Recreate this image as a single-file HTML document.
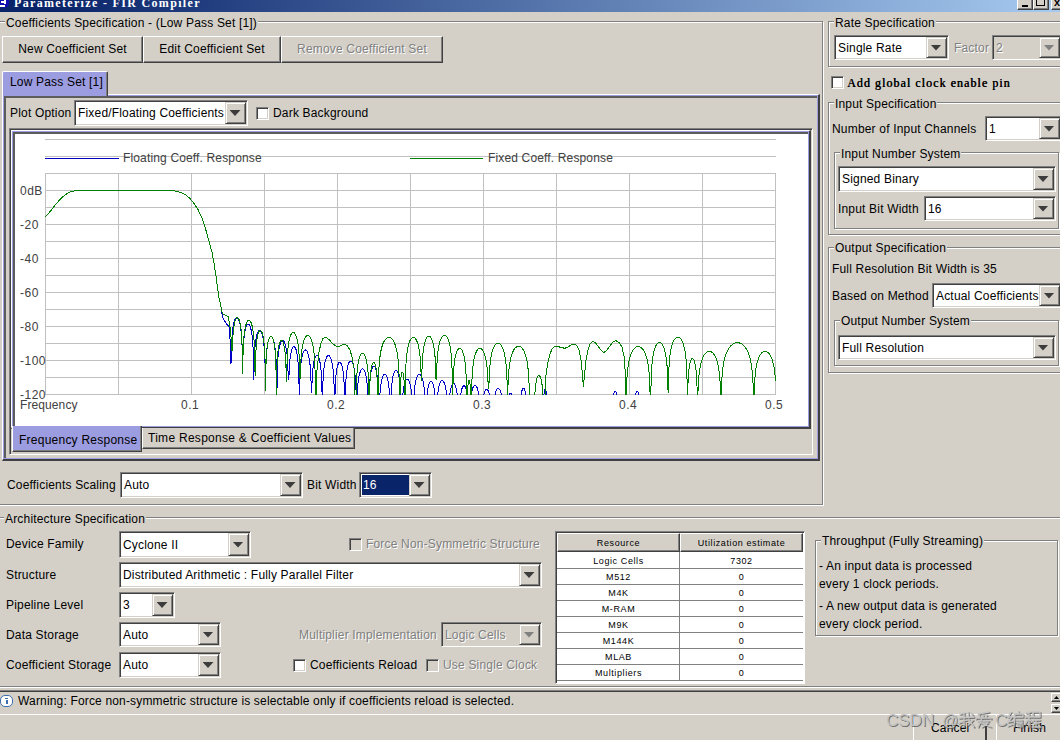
<!DOCTYPE html>
<html><head><meta charset="utf-8">
<style>
html,body{margin:0;padding:0}
body{width:1060px;height:740px;overflow:hidden;background:#D4D0C8;position:relative;font-family:"Liberation Sans",sans-serif;font-size:12px;color:#000;letter-spacing:0.18px}
div,span{box-sizing:border-box}
.a{position:absolute}
.t{position:absolute;white-space:nowrap;line-height:14px;height:14px}
.dis{color:#808080;text-shadow:1px 1px 0 #fff}
.grp{position:absolute;border:1px solid #808080;box-shadow:inset 1px 1px 0 #fff,1px 1px 0 #fff}
.gt{position:absolute;white-space:nowrap;line-height:14px;margin-top:1px;background:#D4D0C8;padding:0 1px}
.btn{position:absolute;background:#D4D0C8;border-top:1px solid #fff;border-left:1px solid #fff;border-right:1px solid #404040;border-bottom:1px solid #404040;box-shadow:inset -1px -1px 0 #808080;text-align:center}
.cb{position:absolute;background:#fff;border-top:1px solid #808080;border-left:1px solid #808080;border-right:1px solid #fff;border-bottom:1px solid #fff;box-shadow:inset 1px 1px 0 #404040,inset -1px -1px 0 #D4D0C8}
.cb .v{position:absolute;left:3px;top:50%;margin-top:-7px;line-height:14px;white-space:nowrap}
.cb .ar{position:absolute;right:1px;top:1px;bottom:1px;width:21px;background:#D4D0C8;border-top:1px solid #D4D0C8;border-left:1px solid #D4D0C8;border-right:1px solid #404040;border-bottom:1px solid #404040;box-shadow:inset 1px 1px 0 #fff,inset -1px -1px 0 #808080}
.cb .ar:after{content:"";position:absolute;left:50%;top:50%;margin-left:-6px;margin-top:-3px;width:11px;height:6px;background:#000;clip-path:polygon(0 0,100% 0,50% 100%);background:#3C3C3C}
.cb.dsb{background:#D4D0C8}
.cb.dsb .v{color:#808080;text-shadow:1px 1px 0 #fff}
.cb.dsb .ar:after{background:#808080}
.chk{position:absolute;width:13px;height:13px;background:#fff;border-top:1px solid #808080;border-left:1px solid #808080;border-right:1px solid #fff;border-bottom:1px solid #fff;box-shadow:inset 1px 1px 0 #404040,inset -1px -1px 0 #D4D0C8}
.chk.dsb{background:#D4D0C8}
.bf{position:absolute;border-top:1px solid #fff;border-left:1px solid #fff;border-right:2px solid #404040;border-bottom:2px solid #404040;box-shadow:inset 1px 1px 0 #9C9CE0,inset -1px -1px 0 #9C9CE0,inset 3px 3px 0 #5c5c5c}
.sunk{position:absolute;border-top:1px solid #808080;border-left:1px solid #808080;border-right:1px solid #fff;border-bottom:1px solid #fff;box-shadow:inset 1px 1px 0 #404040,inset -1px -1px 0 #D4D0C8}
.tab{position:absolute;background:#D4D0C8;border-top:1px solid #fff;border-left:1px solid #fff;border-right:1px solid #404040;box-shadow:inset -1px 0 0 #808080}
.tabsel{background:#9C9CE0}
</style></head><body>

<!-- title bar -->
<div class="a" style="left:0;top:0;width:1060px;height:12px;background:linear-gradient(to right,#0A246A 0%,#0A246A 5%,#A6CAF0 100%);overflow:hidden">
  <div class="t" style="left:14px;top:-5px;font-family:'Liberation Serif',serif;font-weight:bold;font-size:12px;letter-spacing:1.33px;color:#fff;line-height:16px;height:16px">Parameterize - FIR Compiler</div>
  <div class="a" style="left:-1px;top:-4px;width:10px;height:12px;border-radius:5px;background:#1010B0"></div>
  <div class="a" style="left:1px;top:1px;width:4px;height:2px;background:#fff"></div>
  <div class="a" style="left:4px;top:-1px;width:2px;height:5px;background:#fff"></div>
  <div class="a" style="left:0px;top:5px;width:5px;height:2px;background:#fff"></div>
  <div class="btn" style="left:1017px;top:-6px;width:16px;height:16px"></div>
  <div class="a" style="left:1022px;top:5px;width:6px;height:2px;background:#000"></div>
  <div class="btn" style="left:1033px;top:-6px;width:16px;height:16px"></div>
  <div class="a" style="left:1036px;top:-2px;width:9px;height:8px;border:1px solid #000;border-top-width:2px"></div>
  <div class="btn" style="left:1051px;top:-6px;width:16px;height:16px"></div>
  <div class="t" style="left:1054px;top:-5px;font-weight:bold;font-size:11px">x</div>
</div>

<!-- Coefficients Specification group -->
<div class="grp" style="left:-3px;top:21px;width:826px;height:484px"></div>
<div class="gt" style="left:5px;top:15px">Coefficients Specification - (Low Pass Set [1])</div>

<div class="btn" style="left:2px;top:36px;width:141px;height:27px;line-height:24px">New Coefficient Set</div>
<div class="btn" style="left:143px;top:36px;width:138px;height:27px;line-height:24px">Edit Coefficient Set</div>
<div class="btn dis" style="left:281px;top:36px;width:162px;height:27px;line-height:24px;color:#808080;text-shadow:1px 1px 0 #fff">Remove Coefficient Set</div>

<!-- outer tab content -->
<div class="bf" style="left:2px;top:94px;width:818px;height:367px"></div>
<div class="tab tabsel" style="left:2px;top:71px;width:106px;height:25px;border-radius:2px 2px 0 0"></div>
<div class="t" style="left:10px;top:75px">Low Pass Set [1]</div>

<div class="t" style="left:10px;top:106px">Plot Option</div>
<div class="cb" style="left:74px;top:100px;width:174px;height:26px"><span class="v">Fixed/Floating Coefficients</span><div class="ar"></div></div>
<div class="chk" style="left:256px;top:107px"></div>
<div class="t" style="left:273px;top:106px">Dark Background</div>

<!-- chart tabbed pane -->
<div class="sunk" style="left:9px;top:128px;width:804px;height:327px"></div>
<div class="bf" style="left:11px;top:130px;width:800px;height:299px;background:#fff"></div>
<svg class="a" style="left:0;top:0" width="1060" height="460" shape-rendering="crispEdges">
<rect x="45" y="139" width="731" height="1" fill="#C0C0C0"/>
<rect x="45" y="156" width="731" height="1" fill="#C0C0C0"/>
<rect x="45" y="173" width="1" height="222" fill="#C0C0C0"/>
<rect x="118" y="173" width="1" height="222" fill="#C0C0C0"/>
<rect x="191" y="173" width="1" height="222" fill="#C0C0C0"/>
<rect x="264" y="173" width="1" height="222" fill="#C0C0C0"/>
<rect x="337" y="173" width="1" height="222" fill="#C0C0C0"/>
<rect x="410" y="173" width="1" height="222" fill="#C0C0C0"/>
<rect x="483" y="173" width="1" height="222" fill="#C0C0C0"/>
<rect x="556" y="173" width="1" height="222" fill="#C0C0C0"/>
<rect x="629" y="173" width="1" height="222" fill="#C0C0C0"/>
<rect x="702" y="173" width="1" height="222" fill="#C0C0C0"/>
<rect x="775" y="173" width="1" height="222" fill="#C0C0C0"/>
<rect x="45" y="173" width="731" height="1" fill="#C0C0C0"/>
<rect x="45" y="190" width="731" height="1" fill="#C0C0C0"/>
<rect x="45" y="207" width="731" height="1" fill="#C0C0C0"/>
<rect x="45" y="224" width="731" height="1" fill="#C0C0C0"/>
<rect x="45" y="241" width="731" height="1" fill="#C0C0C0"/>
<rect x="45" y="258" width="731" height="1" fill="#C0C0C0"/>
<rect x="45" y="275" width="731" height="1" fill="#C0C0C0"/>
<rect x="45" y="292" width="731" height="1" fill="#C0C0C0"/>
<rect x="45" y="309" width="731" height="1" fill="#C0C0C0"/>
<rect x="45" y="326" width="731" height="1" fill="#C0C0C0"/>
<rect x="45" y="343" width="731" height="1" fill="#C0C0C0"/>
<rect x="45" y="360" width="731" height="1" fill="#C0C0C0"/>
<rect x="45" y="377" width="731" height="1" fill="#C0C0C0"/>
<rect x="45" y="394" width="731" height="1" fill="#C0C0C0"/>
<rect x="45" y="158" width="74" height="1" fill="#0000C0"/>
<rect x="410" y="158" width="73" height="1" fill="#008000"/>
</svg>
<div class="t" style="left:20px;top:184px;color:#404040;letter-spacing:0.5px">0dB</div>
<div class="t" style="left:20px;top:218px;color:#404040;letter-spacing:0.5px">-20</div>
<div class="t" style="left:20px;top:252px;color:#404040;letter-spacing:0.5px">-40</div>
<div class="t" style="left:20px;top:286px;color:#404040;letter-spacing:0.5px">-60</div>
<div class="t" style="left:20px;top:320px;color:#404040;letter-spacing:0.5px">-80</div>
<div class="t" style="left:20px;top:354px;color:#404040;letter-spacing:0.5px">-100</div>
<div class="t" style="left:20px;top:388px;color:#404040;letter-spacing:0.5px">-120</div>
<div class="t" style="left:20px;top:398px;color:#404040;letter-spacing:0.1px">Frequency</div>
<div class="t" style="left:181px;top:398px;color:#404040;letter-spacing:0.5px">0.1</div>
<div class="t" style="left:327px;top:398px;color:#404040;letter-spacing:0.5px">0.2</div>
<div class="t" style="left:473px;top:398px;color:#404040;letter-spacing:0.5px">0.3</div>
<div class="t" style="left:619px;top:398px;color:#404040;letter-spacing:0.5px">0.4</div>
<div class="t" style="left:765px;top:398px;color:#404040;letter-spacing:0.5px">0.5</div>
<div class="t" style="left:123px;top:151px;color:#404040;letter-spacing:0.15px">Floating Coeff. Response</div>
<div class="t" style="left:488px;top:151px;color:#404040;letter-spacing:0.15px">Fixed Coeff. Response</div>
<svg class="a" style="left:0;top:0" width="1060" height="460">
<defs><clipPath id="pc"><rect x="44" y="170" width="733" height="225"/></clipPath></defs>
<g clip-path="url(#pc)" fill="none" stroke-width="1" stroke-linejoin="miter" shape-rendering="crispEdges">
<polyline points="45.50,216.80 48.00,214.00 50.00,211.60 53.00,208.00 56.00,204.00 60.00,199.50 63.00,196.60 66.00,194.30 69.00,192.50 72.00,191.40 75.00,190.80 79.00,190.50 170.00,190.50 174.00,190.70 178.00,191.60 182.00,193.00 186.00,195.00 190.00,198.50 194.00,203.50 198.00,209.50 202.00,218.00 206.00,230.50 209.00,241.00 212.00,252.40 214.00,263.00 216.00,276.00 217.50,288.00 219.00,298.00 220.50,304.00 221.50,309.50 222.30,316.00 224.00,320.00 226.00,323.00 229.00,327.00 230.50,345.00 231.00,364.00 231.00,364.00 231.25,357.24 231.50,347.04 231.76,341.11 232.01,336.94 232.26,333.75 232.51,331.19 232.77,329.06 233.02,327.27 233.27,325.73 233.52,324.40 233.77,323.24 234.03,322.23 234.28,321.35 234.53,320.58 234.78,319.92 235.03,319.36 235.29,318.88 235.54,318.48 235.79,318.16 236.04,317.91 236.30,317.74 236.55,317.63 236.80,317.60 237.05,317.63 237.30,317.74 237.56,317.91 237.81,318.16 238.06,318.48 238.31,318.88 238.57,319.36 238.82,319.92 239.07,320.58 239.32,321.35 239.57,322.23 239.83,323.24 240.08,324.40 240.33,325.73 240.58,327.27 240.83,329.06 241.09,331.19 241.34,333.75 241.59,336.94 241.84,341.11 242.10,347.04 242.35,357.24 242.60,359.50 242.60,359.50 242.85,359.50 243.11,353.09 243.36,347.17 243.62,343.01 243.87,339.82 244.13,337.27 244.38,335.16 244.64,333.38 244.89,331.86 245.15,330.55 245.40,329.42 245.65,328.44 245.91,327.58 246.16,326.85 246.42,326.23 246.67,325.70 246.93,325.26 247.18,324.91 247.44,324.64 247.69,324.45 247.95,324.34 248.20,324.30 248.45,324.34 248.71,324.45 248.96,324.64 249.22,324.91 249.47,325.26 249.73,325.70 249.98,326.23 250.24,326.85 250.49,327.58 250.75,328.44 251.00,329.42 251.25,330.55 251.51,331.86 251.76,333.38 252.02,335.16 252.27,337.27 252.53,339.82 252.78,343.01 253.04,347.17 253.29,353.09 253.55,363.29 253.80,379.70 253.80,379.70 254.05,370.04 254.30,359.84 254.55,353.91 254.80,349.74 255.05,346.55 255.30,343.99 255.55,341.86 255.80,340.07 256.05,338.53 256.30,337.20 256.55,336.04 256.80,335.03 257.05,334.15 257.30,333.38 257.55,332.72 257.80,332.16 258.05,331.68 258.30,331.28 258.55,330.96 258.80,330.71 259.05,330.54 259.30,330.43 259.55,330.40 259.80,330.43 260.05,330.54 260.30,330.71 260.55,330.96 260.80,331.28 261.05,331.68 261.30,332.16 261.55,332.72 261.80,333.38 262.05,334.15 262.30,335.03 262.55,336.04 262.80,337.20 263.05,338.53 263.30,340.07 263.55,341.86 263.80,343.99 264.05,346.55 264.30,349.74 264.55,353.91 264.80,359.84 265.05,363.50 265.30,363.50 265.30,363.50 265.55,363.50 265.80,363.50 266.05,360.01 266.30,355.84 266.55,352.65 266.80,350.09 267.05,347.96 267.30,346.17 267.55,344.63 267.80,343.30 268.05,342.14 268.30,341.13 268.55,340.25 268.80,339.48 269.05,338.82 269.30,338.26 269.55,337.78 269.80,337.38 270.05,337.06 270.30,336.81 270.55,336.64 270.80,336.53 271.05,336.50 271.30,336.53 271.55,336.64 271.80,336.81 272.05,337.06 272.30,337.38 272.55,337.78 272.80,338.26 273.05,338.82 273.30,339.48 273.55,340.25 273.80,341.13 274.05,342.14 274.30,343.30 274.55,344.63 274.80,346.17 275.05,347.96 275.30,350.09 275.55,352.65 275.80,355.84 276.05,360.01 276.30,365.94 276.55,376.14 276.80,440.00 276.80,440.00 277.05,380.14 277.31,369.94 277.56,364.01 277.82,359.84 278.07,356.65 278.33,354.09 278.58,351.96 278.83,350.17 279.09,348.63 279.34,347.30 279.60,346.14 279.85,345.13 280.11,344.25 280.36,343.48 280.62,342.82 280.87,342.26 281.12,341.78 281.38,341.38 281.63,341.06 281.89,340.81 282.14,340.64 282.40,340.53 282.65,340.50 282.90,340.53 283.16,340.64 283.41,340.81 283.67,341.06 283.92,341.38 284.18,341.78 284.43,342.26 284.68,342.82 284.94,343.48 285.19,344.25 285.45,345.13 285.70,346.14 285.96,347.30 286.21,348.63 286.47,350.17 286.72,351.96 286.97,354.09 287.23,356.65 287.48,359.84 287.74,364.01 287.99,369.94 288.25,379.70 288.50,379.70 288.50,379.70 288.75,379.70 289.00,375.05 289.25,369.13 289.50,364.98 289.76,361.80 290.01,359.25 290.26,357.15 290.51,355.38 290.76,353.87 291.01,352.57 291.26,351.45 291.51,350.49 291.77,349.65 292.02,348.94 292.27,348.33 292.52,347.83 292.77,347.41 293.02,347.09 293.27,346.85 293.52,346.69 293.77,346.61 294.03,346.61 294.28,346.69 294.53,346.85 294.78,347.09 295.03,347.41 295.28,347.83 295.53,348.33 295.78,348.94 296.03,349.65 296.29,350.49 296.54,351.45 296.79,352.57 297.04,353.87 297.29,355.38 297.54,357.15 297.79,359.25 298.04,361.80 298.30,364.98 298.55,369.13 298.80,375.05 299.05,385.25 299.30,440.00 299.30,440.00 299.55,390.27 299.81,380.07 300.06,374.13 300.32,369.96 300.57,366.76 300.82,364.18 301.08,362.05 301.33,360.24 301.59,358.68 301.84,357.33 302.10,356.15 302.35,355.12 302.60,354.21 302.86,353.42 303.11,352.73 303.37,352.12 303.62,351.61 303.88,351.17 304.13,350.81 304.38,350.51 304.64,350.29 304.89,350.13 305.15,350.03 305.40,350.00 305.65,350.03 305.91,350.13 306.16,350.29 306.42,350.51 306.67,350.81 306.93,351.17 307.18,351.61 307.43,352.12 307.69,352.73 307.94,353.42 308.20,354.21 308.45,355.12 308.70,356.15 308.96,357.33 309.21,358.68 309.47,360.24 309.72,362.05 309.98,364.18 310.23,366.76 310.48,369.96 310.74,374.13 310.99,380.07 311.25,390.27 311.50,392.00 311.50,392.00 311.75,392.00 312.00,383.85 312.25,377.93 312.50,373.78 312.76,370.60 313.01,368.05 313.26,365.95 313.51,364.18 313.76,362.67 314.01,361.37 314.26,360.25 314.51,359.29 314.77,358.45 315.02,357.74 315.27,357.13 315.52,356.63 315.77,356.21 316.02,355.89 316.27,355.65 316.52,355.49 316.77,355.41 317.03,355.41 317.28,355.49 317.53,355.65 317.78,355.89 318.03,356.21 318.28,356.63 318.53,357.13 318.78,357.74 319.03,358.45 319.29,359.29 319.54,360.25 319.79,361.37 320.04,362.67 320.29,364.18 320.54,365.95 320.79,368.05 321.04,370.60 321.30,373.78 321.55,377.93 321.80,383.85 322.05,394.05 322.30,440.00 322.30,440.00 322.55,396.17 322.80,385.97 323.05,380.03 323.30,375.86 323.56,372.65 323.81,370.07 324.06,367.93 324.31,366.11 324.56,364.55 324.81,363.19 325.06,362.00 325.31,360.96 325.56,360.04 325.81,359.23 326.07,358.53 326.32,357.91 326.57,357.38 326.82,356.92 327.07,356.54 327.32,356.22 327.57,355.97 327.82,355.79 328.07,355.67 328.32,355.61 328.58,355.61 328.83,355.67 329.08,355.79 329.33,355.97 329.58,356.22 329.83,356.54 330.08,356.92 330.33,357.38 330.58,357.91 330.83,358.53 331.09,359.23 331.34,360.04 331.59,360.96 331.84,362.00 332.09,363.19 332.34,364.55 332.59,366.11 332.84,367.93 333.09,370.07 333.34,372.65 333.60,375.86 333.85,380.03 334.10,385.97 334.35,396.17 334.60,440.00 334.60,440.00 334.85,400.25 335.10,390.05 335.35,384.14 335.60,379.99 335.86,376.83 336.11,374.30 336.36,372.21 336.61,370.46 336.86,368.98 337.11,367.71 337.36,366.62 337.61,365.68 337.87,364.89 338.12,364.21 338.37,363.65 338.62,363.20 338.87,362.84 339.12,362.57 339.37,362.40 339.62,362.31 339.88,362.31 340.13,362.40 340.38,362.57 340.63,362.84 340.88,363.20 341.13,363.65 341.38,364.21 341.63,364.89 341.89,365.68 342.14,366.62 342.39,367.71 342.64,368.98 342.89,370.46 343.14,372.21 343.39,374.30 343.64,376.83 343.90,379.99 344.15,384.14 344.40,390.05 344.65,400.25 344.90,440.00 344.90,440.00 345.15,400.64 345.40,390.44 345.66,384.51 345.91,380.34 346.16,377.15 346.41,374.59 346.67,372.46 346.92,370.67 347.17,369.13 347.42,367.80 347.67,366.64 347.93,365.63 348.18,364.75 348.43,363.98 348.68,363.32 348.93,362.76 349.19,362.28 349.44,361.88 349.69,361.56 349.94,361.31 350.20,361.14 350.45,361.03 350.70,361.00 350.95,361.03 351.20,361.14 351.46,361.31 351.71,361.56 351.96,361.88 352.21,362.28 352.47,362.76 352.72,363.32 352.97,363.98 353.22,364.75 353.47,365.63 353.73,366.64 353.98,367.80 354.23,369.13 354.48,370.67 354.73,372.46 354.99,374.59 355.24,377.15 355.49,380.34 355.74,384.51 356.00,390.44 356.25,400.64 356.50,440.00 356.50,440.00 356.75,409.27 357.00,399.07 357.26,393.13 357.51,388.96 357.76,385.76 358.01,383.18 358.26,381.05 358.52,379.24 358.77,377.68 359.02,376.33 359.27,375.15 359.52,374.12 359.78,373.21 360.03,372.42 360.28,371.73 360.53,371.12 360.79,370.61 361.04,370.17 361.29,369.81 361.54,369.51 361.79,369.29 362.05,369.13 362.30,369.03 362.55,369.00 362.80,369.03 363.05,369.13 363.31,369.29 363.56,369.51 363.81,369.81 364.06,370.17 364.31,370.61 364.57,371.12 364.82,371.73 365.07,372.42 365.32,373.21 365.58,374.12 365.83,375.15 366.08,376.33 366.33,377.68 366.58,379.24 366.84,381.05 367.09,383.18 367.34,385.76 367.59,388.96 367.84,393.13 368.10,399.07 368.35,409.27 368.60,440.00 368.60,440.00 368.85,404.15 369.11,393.95 369.36,388.04 369.61,383.89 369.87,380.73 370.12,378.20 370.38,376.11 370.63,374.36 370.88,372.88 371.14,371.61 371.39,370.52 371.64,369.58 371.90,368.79 372.15,368.11 372.40,367.55 372.66,367.10 372.91,366.74 373.17,366.47 373.42,366.30 373.67,366.21 373.93,366.21 374.18,366.30 374.43,366.47 374.69,366.74 374.94,367.10 375.20,367.55 375.45,368.11 375.70,368.79 375.96,369.58 376.21,370.52 376.46,371.61 376.72,372.88 376.97,374.36 377.22,376.11 377.48,378.20 377.73,380.73 377.99,383.89 378.24,388.04 378.49,393.95 378.75,404.15 379.00,440.00 379.00,440.00 379.25,413.84 379.50,403.64 379.75,397.71 380.00,393.54 380.25,390.35 380.50,387.79 380.75,385.66 381.00,383.87 381.25,382.33 381.50,381.00 381.75,379.84 382.00,378.83 382.25,377.95 382.50,377.18 382.75,376.52 383.00,375.96 383.25,375.48 383.50,375.08 383.75,374.76 384.00,374.51 384.25,374.34 384.50,374.23 384.75,374.20 385.00,374.23 385.25,374.34 385.50,374.51 385.75,374.76 386.00,375.08 386.25,375.48 386.50,375.96 386.75,376.52 387.00,377.18 387.25,377.95 387.50,378.83 387.75,379.84 388.00,381.00 388.25,382.33 388.50,383.87 388.75,385.66 389.00,387.79 389.25,390.35 389.50,393.54 389.75,397.71 390.00,403.64 390.25,413.84 390.50,440.00 390.50,440.00 390.75,409.19 391.00,398.99 391.25,393.07 391.50,388.91 391.75,385.72 392.00,383.17 392.25,381.06 392.50,379.28 392.75,377.76 393.00,376.45 393.25,375.32 393.50,374.34 393.75,373.48 394.00,372.75 394.25,372.13 394.50,371.60 394.75,371.16 395.00,370.81 395.25,370.54 395.50,370.35 395.75,370.24 396.00,370.20 396.25,370.24 396.50,370.35 396.75,370.54 397.00,370.81 397.25,371.16 397.50,371.60 397.75,372.13 398.00,372.75 398.25,373.48 398.50,374.34 398.75,375.32 399.00,376.45 399.25,377.76 399.50,379.28 399.75,381.06 400.00,383.17 400.25,385.72 400.50,388.91 400.75,393.07 401.00,398.99 401.25,409.19 401.50,440.00 401.50,440.00 401.75,418.94 402.00,408.74 402.25,402.81 402.50,398.64 402.75,395.45 403.00,392.89 403.25,390.76 403.50,388.97 403.75,387.43 404.00,386.10 404.25,384.94 404.50,383.93 404.75,383.05 405.00,382.28 405.25,381.62 405.50,381.06 405.75,380.58 406.00,380.18 406.25,379.86 406.50,379.61 406.75,379.44 407.00,379.33 407.25,379.30 407.50,379.33 407.75,379.44 408.00,379.61 408.25,379.86 408.50,380.18 408.75,380.58 409.00,381.06 409.25,381.62 409.50,382.28 409.75,383.05 410.00,383.93 410.25,384.94 410.50,386.10 410.75,387.43 411.00,388.97 411.25,390.76 411.50,392.89 411.75,395.45 412.00,398.64 412.25,402.81 412.50,408.74 412.75,418.94 413.00,440.00 413.00,440.00 413.25,415.56 413.50,405.36 413.75,399.42 414.00,395.23 414.25,392.02 414.51,389.43 414.76,387.28 415.01,385.45 415.26,383.87 415.51,382.50 415.76,381.29 416.01,380.23 416.26,379.29 416.51,378.46 416.76,377.73 417.02,377.09 417.27,376.52 417.52,376.04 417.77,375.62 418.02,375.26 418.27,374.97 418.52,374.75 418.77,374.58 419.02,374.46 419.27,374.41 419.53,374.41 419.78,374.46 420.03,374.58 420.28,374.75 420.53,374.97 420.78,375.26 421.03,375.62 421.28,376.04 421.53,376.52 421.78,377.09 422.04,377.73 422.29,378.46 422.54,379.29 422.79,380.23 423.04,381.29 423.29,382.50 423.54,383.87 423.79,385.45 424.04,387.28 424.29,389.43 424.55,392.02 424.80,395.23 425.05,399.42 425.30,405.36 425.55,415.56 425.80,440.00 425.80,440.00 426.05,418.95 426.31,408.75 426.56,402.84 426.81,398.69 427.07,395.53 427.32,393.00 427.58,390.91 427.83,389.16 428.08,387.68 428.34,386.41 428.59,385.32 428.84,384.38 429.10,383.59 429.35,382.91 429.60,382.35 429.86,381.90 430.11,381.54 430.37,381.27 430.62,381.10 430.87,381.01 431.13,381.01 431.38,381.10 431.63,381.27 431.89,381.54 432.14,381.90 432.40,382.35 432.65,382.91 432.90,383.59 433.16,384.38 433.41,385.32 433.66,386.41 433.92,387.68 434.17,389.16 434.42,390.91 434.68,393.00 434.93,395.53 435.19,398.69 435.44,402.84 435.69,408.75 435.95,418.95 436.20,440.00 436.20,440.00 436.45,420.56 436.71,410.36 436.96,404.43 437.21,400.25 437.47,397.06 437.72,394.49 437.97,392.36 438.23,390.55 438.48,389.01 438.73,387.66 438.99,386.50 439.24,385.47 439.49,384.58 439.74,383.80 440.00,383.12 440.25,382.54 440.50,382.04 440.76,381.62 441.01,381.28 441.26,381.01 441.52,380.81 441.77,380.67 442.02,380.61 442.28,380.61 442.53,380.67 442.78,380.81 443.04,381.01 443.29,381.28 443.54,381.62 443.80,382.04 444.05,382.54 444.30,383.12 444.56,383.80 444.81,384.58 445.06,385.47 445.31,386.50 445.57,387.66 445.82,389.01 446.07,390.55 446.33,392.36 446.58,394.49 446.83,397.06 447.09,400.25 447.34,404.43 447.59,410.36 447.85,420.56 448.10,440.00 448.10,440.00 448.35,422.05 448.60,411.85 448.85,405.93 449.10,401.78 449.36,398.60 449.61,396.05 449.86,393.95 450.11,392.18 450.36,390.67 450.61,389.37 450.86,388.25 451.11,387.29 451.37,386.45 451.62,385.74 451.87,385.13 452.12,384.63 452.37,384.21 452.62,383.89 452.87,383.65 453.12,383.49 453.37,383.41 453.63,383.41 453.88,383.49 454.13,383.65 454.38,383.89 454.63,384.21 454.88,384.63 455.13,385.13 455.38,385.74 455.63,386.45 455.89,387.29 456.14,388.25 456.39,389.37 456.64,390.67 456.89,392.18 457.14,393.95 457.39,396.05 457.64,398.60 457.90,401.78 458.15,405.93 458.40,411.85 458.65,422.05 458.90,440.00 458.90,440.00 459.15,423.28 459.40,413.09 459.66,407.18 459.91,403.04 460.16,399.88 460.41,397.36 460.67,395.29 460.92,393.55 461.17,392.07 461.42,390.82 461.68,389.74 461.93,388.83 462.18,388.05 462.44,387.40 462.69,386.87 462.94,386.44 463.19,386.11 463.44,385.88 463.70,385.75 463.95,385.70 464.20,385.75 464.45,385.88 464.71,386.11 464.96,386.44 465.21,386.87 465.46,387.40 465.72,388.05 465.97,388.83 466.22,389.74 466.48,390.82 466.73,392.07 466.98,393.55 467.23,395.29 467.49,397.36 467.74,399.88 467.99,403.04 468.24,407.18 468.50,413.09 468.75,423.28 469.00,440.00 469.00,440.00 469.25,425.67 469.50,415.47 469.75,409.53 470.00,405.36 470.25,402.16 470.50,399.58 470.75,397.45 471.00,395.64 471.25,394.08 471.50,392.73 471.75,391.55 472.00,390.52 472.25,389.61 472.50,388.82 472.75,388.13 473.00,387.52 473.25,387.01 473.50,386.57 473.75,386.21 474.00,385.91 474.25,385.69 474.50,385.53 474.75,385.43 475.00,385.40 475.25,385.43 475.50,385.53 475.75,385.69 476.00,385.91 476.25,386.21 476.50,386.57 476.75,387.01 477.00,387.52 477.25,388.13 477.50,388.82 477.75,389.61 478.00,390.52 478.25,391.55 478.50,392.73 478.75,394.08 479.00,395.64 479.25,397.45 479.50,399.58 479.75,402.16 480.00,405.36 480.25,409.53 480.50,415.47 480.75,425.67 481.00,440.00 481.00,440.00 481.25,428.62 481.50,418.42 481.75,412.49 482.00,408.33 482.26,405.14 482.51,402.58 482.76,400.47 483.01,398.68 483.26,397.15 483.51,395.83 483.76,394.68 484.01,393.68 484.26,392.82 484.52,392.07 484.77,391.42 485.02,390.88 485.27,390.42 485.52,390.04 485.77,389.75 486.02,389.53 486.27,389.38 486.52,389.31 486.78,389.31 487.03,389.38 487.28,389.53 487.53,389.75 487.78,390.04 488.03,390.42 488.28,390.88 488.53,391.42 488.78,392.07 489.04,392.82 489.29,393.68 489.54,394.68 489.79,395.83 490.04,397.15 490.29,398.68 490.54,400.47 490.79,402.58 491.04,405.14 491.30,408.33 491.55,412.49 491.80,418.42 492.05,428.62 492.30,440.00 492.30,440.00 492.55,428.46 492.81,418.26 493.06,412.33 493.31,408.15 493.57,404.96 493.82,402.39 494.07,400.26 494.33,398.45 494.58,396.91 494.83,395.56 495.09,394.40 495.34,393.37 495.59,392.48 495.84,391.70 496.10,391.02 496.35,390.44 496.60,389.94 496.86,389.52 497.11,389.18 497.36,388.91 497.62,388.71 497.87,388.57 498.12,388.51 498.38,388.51 498.63,388.57 498.88,388.71 499.14,388.91 499.39,389.18 499.64,389.52 499.90,389.94 500.15,390.44 500.40,391.02 500.66,391.70 500.91,392.48 501.16,393.37 501.41,394.40 501.67,395.56 501.92,396.91 502.17,398.45 502.43,400.26 502.68,402.39 502.93,404.96 503.19,408.15 503.44,412.33 503.69,418.26 503.95,428.46 504.20,440.00" stroke="#0000C8"/>
<polyline points="506.00,440.00 506.25,429.43 506.50,419.25 506.75,413.36 507.00,409.24 507.25,406.12 507.50,403.64 507.75,401.61 508.00,399.93 508.25,398.52 508.50,397.34 508.75,396.35 509.00,395.52 509.25,394.85 509.50,394.32 509.75,393.91 510.00,393.63 510.25,393.46 510.50,393.40 510.75,393.46 511.00,393.63 511.25,393.91 511.50,394.32 511.75,394.85 512.00,395.52 512.25,396.35 512.50,397.34 512.75,398.52 513.00,399.93 513.25,401.61 513.50,403.64 513.75,406.12 514.00,409.24 514.25,413.36 514.50,419.25 514.75,429.43 515.00,440.00" stroke="#0000C8"/>
<polyline points="519.40,440.00 519.65,422.50 519.90,412.33 520.15,406.46 520.40,402.38 520.65,399.30 520.90,396.88 521.15,394.92 521.40,393.32 521.65,392.00 521.90,390.93 522.15,390.06 522.40,389.37 522.65,388.85 522.90,388.49 523.15,388.27 523.40,388.20 523.65,388.27 523.90,388.49 524.15,388.85 524.40,389.37 524.65,390.06 524.90,390.93 525.15,392.00 525.40,393.32 525.65,394.92 525.90,396.88 526.15,399.30 526.40,402.38 526.65,406.46 526.90,412.33 527.15,422.50 527.40,440.00" stroke="#0000C8"/>
<polyline points="542.60,440.00 542.86,417.41 543.11,407.34 543.37,401.63 543.63,397.77 543.89,394.99 544.14,392.93 544.40,391.42 544.66,390.36 544.91,389.67 545.17,389.34 545.43,389.34 545.69,389.67 545.94,390.36 546.20,391.42 546.46,392.93 546.71,394.99 546.97,397.77 547.23,401.63 547.49,407.34 547.74,417.41 548.00,440.00" stroke="#0000C8"/>
<polyline points="611.00,440.00 611.25,426.49 611.50,416.32 611.75,410.43 612.00,406.33 612.25,403.23 612.50,400.77 612.75,398.78 613.00,397.13 613.25,395.77 613.50,394.63 613.75,393.70 614.00,392.94 614.25,392.33 614.50,391.87 614.75,391.55 615.00,391.36 615.25,391.30 615.50,391.36 615.75,391.55 616.00,391.87 616.25,392.33 616.50,392.94 616.75,393.70 617.00,394.63 617.25,395.77 617.50,397.13 617.75,398.78 618.00,400.77 618.25,403.23 618.50,406.33 618.75,410.43 619.00,416.32 619.25,426.49 619.50,440.00" stroke="#0000C8"/>
<polyline points="633.00,440.00 633.25,426.49 633.50,416.32 633.75,410.43 634.00,406.33 634.25,403.23 634.50,400.77 634.75,398.78 635.00,397.13 635.25,395.77 635.50,394.63 635.75,393.70 636.00,392.94 636.25,392.33 636.50,391.87 636.75,391.55 637.00,391.36 637.25,391.30 637.50,391.36 637.75,391.55 638.00,391.87 638.25,392.33 638.50,392.94 638.75,393.70 639.00,394.63 639.25,395.77 639.50,397.13 639.75,398.78 640.00,400.77 640.25,403.23 640.50,406.33 640.75,410.43 641.00,416.32 641.25,426.49 641.50,440.00" stroke="#0000C8"/>
<polyline points="45.50,216.80 48.00,214.00 50.00,211.60 53.00,208.00 56.00,204.00 60.00,199.50 63.00,196.60 66.00,194.30 69.00,192.50 72.00,191.40 75.00,190.80 79.00,190.50 170.00,190.50 174.00,190.70 178.00,191.60 182.00,193.00 186.00,195.00 190.00,198.50 194.00,203.50 198.00,209.50 202.00,218.00 206.00,230.50 209.00,241.00 212.00,252.40 214.00,263.00 216.00,276.00 217.50,288.00 219.00,298.00 220.50,304.00 221.50,309.50 222.30,313.50 225.00,315.00 228.40,316.90 230.50,330.00 232.00,350.70 232.00,350.70 232.25,350.70 232.50,345.71 232.76,339.79 233.01,335.64 233.26,332.47 233.51,329.93 233.77,327.84 234.02,326.07 234.27,324.58 234.52,323.29 234.78,322.19 235.03,321.23 235.28,320.42 235.53,319.72 235.79,319.14 236.04,318.66 236.29,318.27 236.54,317.97 236.80,317.77 237.05,317.64 237.30,317.60 237.55,317.64 237.80,317.77 238.06,317.97 238.31,318.27 238.56,318.66 238.81,319.14 239.07,319.72 239.32,320.42 239.57,321.23 239.82,322.19 240.08,323.29 240.33,324.58 240.58,326.07 240.83,327.84 241.09,329.93 241.34,332.47 241.59,335.64 241.84,339.79 242.10,345.71 242.35,355.90 242.60,374.30 242.60,374.30 242.85,361.17 243.10,350.97 243.35,345.03 243.60,340.85 243.85,337.64 244.10,335.06 244.35,332.91 244.60,331.08 244.85,329.51 245.10,328.15 245.35,326.95 245.60,325.90 245.85,324.97 246.10,324.15 246.35,323.43 246.60,322.80 246.85,322.25 247.10,321.78 247.35,321.38 247.60,321.04 247.85,320.77 248.10,320.56 248.35,320.42 248.60,320.33 248.85,320.30 249.10,320.33 249.35,320.42 249.60,320.56 249.85,320.77 250.10,321.04 250.35,321.38 250.60,321.78 250.85,322.25 251.10,322.80 251.35,323.43 251.60,324.15 251.85,324.97 252.10,325.90 252.35,326.95 252.60,328.15 252.85,329.51 253.10,331.08 253.35,332.91 253.60,335.06 253.85,337.64 254.10,340.85 254.35,345.03 254.60,350.97 254.85,361.17 255.10,375.70 255.10,375.70 255.35,368.35 255.61,358.15 255.86,352.24 256.11,348.09 256.37,344.93 256.62,342.40 256.88,340.31 257.13,338.56 257.38,337.08 257.64,335.81 257.89,334.72 258.14,333.78 258.40,332.99 258.65,332.31 258.90,331.75 259.16,331.30 259.41,330.94 259.67,330.67 259.92,330.50 260.17,330.41 260.43,330.41 260.68,330.50 260.93,330.67 261.19,330.94 261.44,331.30 261.70,331.75 261.95,332.31 262.20,332.99 262.46,333.78 262.71,334.72 262.96,335.81 263.22,337.08 263.47,338.56 263.72,340.31 263.98,342.40 264.23,344.93 264.49,348.09 264.74,352.24 264.99,358.15 265.25,368.35 265.50,390.50 265.50,390.50 265.75,374.85 266.01,364.65 266.26,358.73 266.51,354.58 266.77,351.40 267.02,348.85 267.27,346.75 267.53,344.98 267.78,343.47 268.03,342.17 268.29,341.05 268.54,340.09 268.80,339.25 269.05,338.54 269.30,337.93 269.56,337.43 269.81,337.01 270.06,336.69 270.32,336.45 270.57,336.29 270.82,336.21 271.08,336.21 271.33,336.29 271.58,336.45 271.84,336.69 272.09,337.01 272.34,337.43 272.60,337.93 272.85,338.54 273.10,339.25 273.36,340.09 273.61,341.05 273.87,342.17 274.12,343.47 274.37,344.98 274.63,346.75 274.88,348.85 275.13,351.40 275.39,354.58 275.64,358.73 275.89,364.65 276.15,374.85 276.40,440.00 276.40,440.00 276.65,378.08 276.90,367.89 277.16,361.98 277.41,357.84 277.66,354.68 277.91,352.16 278.17,350.09 278.42,348.35 278.67,346.87 278.92,345.62 279.18,344.54 279.43,343.63 279.68,342.85 279.94,342.20 280.19,341.67 280.44,341.24 280.69,340.91 280.94,340.68 281.20,340.55 281.45,340.50 281.70,340.55 281.95,340.68 282.21,340.91 282.46,341.24 282.71,341.67 282.96,342.20 283.22,342.85 283.47,343.63 283.72,344.54 283.98,345.62 284.23,346.87 284.48,348.35 284.73,350.09 284.99,352.16 285.24,354.68 285.49,357.84 285.74,361.98 286.00,367.89 286.25,378.08 286.50,382.40 286.50,382.40 286.75,374.41 287.00,364.20 287.25,358.25 287.50,354.06 287.75,350.84 288.00,348.24 288.25,346.08 288.50,344.23 288.75,342.64 289.00,341.24 289.25,340.01 289.50,338.93 289.75,337.96 290.00,337.10 290.25,336.34 290.50,335.66 290.75,335.05 291.00,334.52 291.25,334.06 291.50,333.66 291.75,333.32 292.00,333.03 292.25,332.80 292.50,332.63 292.75,332.50 293.00,332.43 293.25,332.40 293.50,332.43 293.75,332.50 294.00,332.63 294.25,332.80 294.50,333.03 294.75,333.32 295.00,333.66 295.25,334.06 295.50,334.52 295.75,335.05 296.00,335.66 296.25,336.34 296.50,337.10 296.75,337.96 297.00,338.93 297.25,340.01 297.50,341.24 297.75,342.64 298.00,344.23 298.25,346.08 298.50,348.24 298.75,350.84 299.00,354.06 299.25,358.25 299.50,364.20 299.75,374.41 300.00,378.00 300.00,378.00 300.25,378.00 300.50,369.23 300.75,363.27 301.00,359.07 301.25,355.83 301.50,353.21 301.75,351.02 302.00,349.14 302.25,347.51 302.50,346.08 302.75,344.80 303.00,343.67 303.25,342.65 303.50,341.73 303.75,340.90 304.00,340.15 304.25,339.48 304.50,338.87 304.75,338.32 305.00,337.82 305.25,337.38 305.50,336.99 305.75,336.65 306.00,336.35 306.25,336.09 306.50,335.88 306.75,335.71 307.00,335.57 307.25,335.48 307.50,335.42 307.75,335.40 308.00,335.42 308.25,335.48 308.50,335.57 308.75,335.71 309.00,335.88 309.25,336.09 309.50,336.35 309.75,336.65 310.00,336.99 310.25,337.38 310.50,337.82 310.75,338.32 311.00,338.87 311.25,339.48 311.50,340.15 311.75,340.90 312.00,341.73 312.25,342.65 312.50,343.67 312.75,344.80 313.00,346.08 313.25,347.51 313.50,349.14 313.75,351.02 314.00,353.21 314.25,355.83 314.50,359.07 314.75,363.27 315.00,369.23 315.25,379.44 315.50,440.00 317.00,370.00 319.00,352.00 321.00,343.00 323.00,338.50 325.00,337.40 327.00,338.00 330.00,340.50 333.00,344.00 336.00,346.20 339.00,346.50 342.00,345.00 344.30,344.40 347.00,345.50 350.00,350.00 352.00,357.00 354.00,368.00 355.90,440.00 355.90,440.00 356.15,394.93 356.40,384.72 356.65,378.78 356.90,374.59 357.15,371.37 357.41,368.78 357.66,366.62 357.91,364.77 358.16,363.19 358.41,361.80 358.66,360.58 358.91,359.50 359.16,358.54 359.41,357.69 359.66,356.93 359.92,356.27 360.17,355.68 360.42,355.16 360.67,354.71 360.92,354.32 361.17,354.00 361.42,353.73 361.67,353.52 361.92,353.36 362.17,353.26 362.42,353.21 362.68,353.21 362.93,353.26 363.18,353.36 363.43,353.52 363.68,353.73 363.93,354.00 364.18,354.32 364.43,354.71 364.68,355.16 364.93,355.68 365.18,356.27 365.44,356.93 365.69,357.69 365.94,358.54 366.19,359.50 366.44,360.58 366.69,361.80 366.94,363.19 367.19,364.77 367.44,366.62 367.69,368.78 367.95,371.37 368.20,374.59 368.45,378.78 368.70,384.72 368.95,394.93 369.20,440.00 369.20,440.00 369.45,398.12 369.71,387.94 369.96,382.05 370.22,377.94 370.47,374.83 370.73,372.36 370.98,370.35 371.23,368.68 371.49,367.29 371.74,366.13 372.00,365.17 372.25,364.38 372.51,363.74 372.76,363.24 373.01,362.87 373.27,362.63 373.52,362.51 373.78,362.51 374.03,362.63 374.29,362.87 374.54,363.24 374.79,363.74 375.05,364.38 375.30,365.17 375.56,366.13 375.81,367.29 376.07,368.68 376.32,370.35 376.57,372.36 376.83,374.83 377.08,377.94 377.34,382.05 377.59,387.94 377.85,398.12 378.10,440.00 378.10,440.00 378.35,386.27 378.60,376.05 378.85,370.08 379.10,365.85 379.35,362.59 379.60,359.93 379.85,357.70 380.10,355.78 380.35,354.09 380.60,352.60 380.85,351.26 381.10,350.05 381.35,348.96 381.60,347.95 381.85,347.03 382.10,346.18 382.35,345.40 382.60,344.67 382.85,344.00 383.10,343.37 383.35,342.79 383.60,342.25 383.85,341.75 384.10,341.29 384.35,340.85 384.60,340.45 384.85,340.08 385.10,339.74 385.35,339.42 385.60,339.13 385.85,338.87 386.10,338.63 386.35,338.41 386.60,338.21 386.85,338.04 387.10,337.89 387.35,337.76 387.60,337.65 387.85,337.56 388.10,337.49 388.35,337.44 388.60,337.41 388.85,337.40 389.10,337.41 389.35,337.44 389.60,337.49 389.85,337.56 390.10,337.65 390.35,337.76 390.60,337.89 390.85,338.04 391.10,338.21 391.35,338.41 391.60,338.63 391.85,338.87 392.10,339.13 392.35,339.42 392.60,339.74 392.85,340.08 393.10,340.45 393.35,340.85 393.60,341.29 393.85,341.75 394.10,342.25 394.35,342.79 394.60,343.37 394.85,344.00 395.10,344.67 395.35,345.40 395.60,346.18 395.85,347.03 396.10,347.95 396.35,348.96 396.60,350.05 396.85,351.26 397.10,352.60 397.35,354.09 397.60,355.78 397.85,357.70 398.10,359.93 398.35,362.59 398.60,365.85 398.85,370.08 399.10,376.05 399.35,386.27 399.60,440.00 399.60,440.00 399.85,400.79 400.10,390.71 400.35,384.97 400.60,381.08 400.85,378.25 401.10,376.14 401.35,374.55 401.60,373.40 401.85,372.61 402.10,372.15 402.35,372.00 402.60,372.15 402.85,372.61 403.10,373.40 403.35,374.55 403.60,376.14 403.85,378.25 404.10,381.08 404.35,384.97 404.60,390.71 404.85,400.79 405.10,440.00 405.10,440.00 405.35,382.14 405.60,371.92 405.86,365.97 406.11,361.76 406.36,358.51 406.61,355.89 406.87,353.69 407.12,351.80 407.37,350.16 407.62,348.72 407.88,347.43 408.13,346.28 408.38,345.25 408.63,344.31 408.88,343.47 409.14,342.70 409.39,342.00 409.64,341.37 409.89,340.80 410.15,340.28 410.40,339.81 410.65,339.39 410.90,339.01 411.16,338.68 411.41,338.39 411.66,338.14 411.91,337.93 412.16,337.75 412.42,337.61 412.67,337.51 412.92,337.44 413.17,337.40 413.43,337.40 413.68,337.44 413.93,337.51 414.18,337.61 414.44,337.75 414.69,337.93 414.94,338.14 415.19,338.39 415.44,338.68 415.70,339.01 415.95,339.39 416.20,339.81 416.45,340.28 416.71,340.80 416.96,341.37 417.21,342.00 417.46,342.70 417.72,343.47 417.97,344.31 418.22,345.25 418.47,346.28 418.72,347.43 418.98,348.72 419.23,350.16 419.48,351.80 419.73,353.69 419.99,355.89 420.24,358.51 420.49,361.76 420.74,365.97 421.00,371.92 421.25,380.50 421.50,380.50 421.50,380.50 421.75,379.16 422.01,368.95 422.26,363.00 422.51,358.80 422.77,355.57 423.02,352.96 423.27,350.78 423.53,348.91 423.78,347.30 424.03,345.88 424.29,344.63 424.54,343.52 424.79,342.52 425.05,341.63 425.30,340.83 425.56,340.11 425.81,339.47 426.06,338.89 426.32,338.38 426.57,337.93 426.82,337.53 427.08,337.19 427.33,336.89 427.58,336.65 427.84,336.45 428.09,336.30 428.34,336.19 428.60,336.12 428.85,336.10 429.10,336.12 429.36,336.19 429.61,336.30 429.86,336.45 430.12,336.65 430.37,336.89 430.62,337.19 430.88,337.53 431.13,337.93 431.38,338.38 431.64,338.89 431.89,339.47 432.14,340.11 432.40,340.83 432.65,341.63 432.91,342.52 433.16,343.52 433.41,344.63 433.67,345.88 433.92,347.30 434.17,348.91 434.43,350.78 434.68,352.96 434.93,355.57 435.19,358.80 435.44,363.00 435.69,368.95 435.95,379.16 436.20,379.40 436.20,379.40 436.45,379.40 436.70,369.82 436.96,363.87 437.21,359.66 437.46,356.41 437.71,353.79 437.97,351.59 438.22,349.70 438.47,348.06 438.72,346.62 438.98,345.33 439.23,344.18 439.48,343.15 439.73,342.21 439.98,341.37 440.24,340.60 440.49,339.90 440.74,339.27 440.99,338.70 441.25,338.18 441.50,337.71 441.75,337.29 442.00,336.91 442.26,336.58 442.51,336.29 442.76,336.04 443.01,335.83 443.26,335.65 443.52,335.51 443.77,335.41 444.02,335.34 444.27,335.30 444.53,335.30 444.78,335.34 445.03,335.41 445.28,335.51 445.54,335.65 445.79,335.83 446.04,336.04 446.29,336.29 446.54,336.58 446.80,336.91 447.05,337.29 447.30,337.71 447.55,338.18 447.81,338.70 448.06,339.27 448.31,339.90 448.56,340.60 448.82,341.37 449.07,342.21 449.32,343.15 449.57,344.18 449.82,345.33 450.08,346.62 450.33,348.06 450.58,349.70 450.83,351.59 451.09,353.79 451.34,356.41 451.59,359.66 451.84,363.87 452.10,369.82 452.35,380.04 452.60,440.00 452.60,440.00 452.85,390.84 453.11,380.63 453.36,374.68 453.61,370.49 453.87,367.26 454.12,364.66 454.38,362.48 454.63,360.63 454.88,359.02 455.14,357.62 455.39,356.38 455.64,355.28 455.90,354.29 456.15,353.42 456.40,352.63 456.66,351.93 456.91,351.31 457.16,350.76 457.42,350.27 457.67,349.84 457.93,349.47 458.18,349.15 458.43,348.89 458.69,348.67 458.94,348.51 459.19,348.39 459.45,348.32 459.70,348.30 459.95,348.32 460.21,348.39 460.46,348.51 460.71,348.67 460.97,348.89 461.22,349.15 461.48,349.47 461.73,349.84 461.98,350.27 462.24,350.76 462.49,351.31 462.74,351.93 463.00,352.63 463.25,353.42 463.50,354.29 463.76,355.28 464.01,356.38 464.26,357.62 464.52,359.02 464.77,360.63 465.03,362.48 465.28,364.66 465.53,367.26 465.79,370.49 466.04,374.68 466.29,380.63 466.55,390.84 466.80,440.00 466.80,440.00 467.05,406.45 467.30,396.44 467.55,390.84 467.80,387.13 468.05,384.54 468.30,382.72 468.55,381.52 468.80,380.83 469.05,380.60 469.30,380.83 469.55,381.52 469.80,382.72 470.05,384.54 470.30,387.13 470.55,390.84 470.80,396.44 471.05,406.45 471.30,440.00 471.30,440.00 471.55,393.92 471.80,383.70 472.05,377.74 472.30,373.53 472.55,370.28 472.80,367.64 473.06,365.44 473.31,363.54 473.56,361.89 473.81,360.43 474.06,359.13 474.31,357.97 474.56,356.92 474.81,355.96 475.06,355.10 475.31,354.31 475.56,353.59 475.81,352.93 476.06,352.33 476.31,351.78 476.57,351.28 476.82,350.83 477.07,350.42 477.32,350.06 477.57,349.73 477.82,349.43 478.07,349.18 478.32,348.96 478.57,348.77 478.82,348.61 479.07,348.49 479.32,348.40 479.57,348.33 479.82,348.30 480.08,348.30 480.33,348.33 480.58,348.40 480.83,348.49 481.08,348.61 481.33,348.77 481.58,348.96 481.83,349.18 482.08,349.43 482.33,349.73 482.58,350.06 482.83,350.42 483.08,350.83 483.33,351.28 483.59,351.78 483.84,352.33 484.09,352.93 484.34,353.59 484.59,354.31 484.84,355.10 485.09,355.96 485.34,356.92 485.59,357.97 485.84,359.13 486.09,360.43 486.34,361.89 486.59,363.54 486.84,365.44 487.10,367.64 487.35,370.28 487.60,373.53 487.85,377.74 488.10,383.70 488.35,388.00 488.60,388.00 488.60,388.00 488.85,388.00 489.10,379.83 489.36,373.87 489.61,369.65 489.86,366.39 490.11,363.75 490.36,361.53 490.62,359.62 490.87,357.96 491.12,356.48 491.37,355.17 491.62,353.98 491.88,352.91 492.13,351.94 492.38,351.05 492.63,350.23 492.88,349.48 493.14,348.80 493.39,348.16 493.64,347.58 493.89,347.05 494.14,346.56 494.40,346.11 494.65,345.70 494.90,345.32 495.15,344.98 495.40,344.68 495.66,344.40 495.91,344.16 496.16,343.94 496.41,343.75 496.66,343.60 496.92,343.46 497.17,343.36 497.42,343.28 497.67,343.23 497.92,343.20 498.18,343.20 498.43,343.23 498.68,343.28 498.93,343.36 499.18,343.46 499.44,343.60 499.69,343.75 499.94,343.94 500.19,344.16 500.44,344.40 500.70,344.68 500.95,344.98 501.20,345.32 501.45,345.70 501.70,346.11 501.96,346.56 502.21,347.05 502.46,347.58 502.71,348.16 502.96,348.80 503.22,349.48 503.47,350.23 503.72,351.05 503.97,351.94 504.22,352.91 504.48,353.98 504.73,355.17 504.98,356.48 505.23,357.96 505.48,359.62 505.74,361.53 505.99,363.75 506.24,366.39 506.49,369.65 506.74,373.87 507.00,379.83 507.25,390.05 507.50,440.00 507.50,440.00 507.75,395.51 508.00,385.29 508.25,379.32 508.50,375.09 508.76,371.82 509.01,369.17 509.26,366.93 509.51,365.01 509.76,363.32 510.01,361.82 510.26,360.48 510.51,359.27 510.76,358.17 511.02,357.16 511.27,356.23 511.52,355.38 511.77,354.59 512.02,353.86 512.27,353.18 512.52,352.55 512.77,351.96 513.02,351.42 513.28,350.91 513.53,350.44 513.78,349.99 514.03,349.58 514.28,349.20 514.53,348.85 514.78,348.53 515.03,348.23 515.29,347.95 515.54,347.70 515.79,347.47 516.04,347.26 516.29,347.08 516.54,346.91 516.79,346.77 517.04,346.64 517.29,346.54 517.55,346.45 517.80,346.38 518.05,346.34 518.30,346.31 518.55,346.30 518.80,346.31 519.05,346.34 519.30,346.38 519.55,346.45 519.81,346.54 520.06,346.64 520.31,346.77 520.56,346.91 520.81,347.08 521.06,347.26 521.31,347.47 521.56,347.70 521.81,347.95 522.07,348.23 522.32,348.53 522.57,348.85 522.82,349.20 523.07,349.58 523.32,349.99 523.57,350.44 523.82,350.91 524.08,351.42 524.33,351.96 524.58,352.55 524.83,353.18 525.08,353.86 525.33,354.59 525.58,355.38 525.83,356.23 526.08,357.16 526.34,358.17 526.59,359.27 526.84,360.48 527.09,361.82 527.34,363.32 527.59,365.01 527.84,366.93 528.09,369.17 528.34,371.82 528.60,375.09 528.85,379.32 529.10,385.29 529.35,395.51 529.60,440.00 534.00,440.00 534.25,412.71 534.50,402.52 534.75,396.61 535.01,392.48 535.26,389.33 535.51,386.82 535.76,384.75 536.01,383.02 536.26,381.57 536.51,380.33 536.76,379.27 537.02,378.38 537.27,377.62 537.52,377.00 537.77,376.49 538.02,376.09 538.27,375.80 538.52,375.61 538.77,375.51 539.03,375.51 539.28,375.61 539.53,375.80 539.78,376.09 540.03,376.49 540.28,377.00 540.53,377.62 540.78,378.38 541.04,379.27 541.29,380.33 541.54,381.57 541.79,383.02 542.04,384.75 542.29,386.82 542.54,389.33 542.79,392.48 543.05,396.61 543.30,402.52 543.55,412.71 543.80,440.00 544.00,440.00 546.00,375.00 548.00,362.00 550.00,354.00 552.00,349.00 554.70,346.60 558.00,346.50 561.00,347.50 564.90,348.30 568.00,347.00 571.00,345.00 574.50,344.10 577.00,346.00 579.00,350.00 581.00,360.00 582.50,375.00 583.40,386.80 584.50,375.00 586.00,360.00 588.00,350.00 590.00,344.00 592.60,341.50 595.00,342.50 598.00,346.00 601.00,350.00 604.00,352.60 607.00,350.00 610.00,346.00 613.00,342.00 615.90,340.70 619.00,342.50 622.00,347.00 624.00,356.00 625.50,375.00 626.00,440.00 626.00,440.00 626.25,397.25 626.50,387.02 626.75,381.05 627.01,376.82 627.26,373.55 627.51,370.88 627.76,368.64 628.01,366.71 628.26,365.01 628.52,363.51 628.77,362.15 629.02,360.93 629.27,359.81 629.52,358.79 629.77,357.85 630.02,356.97 630.28,356.17 630.53,355.41 630.78,354.71 631.03,354.06 631.28,353.45 631.53,352.88 631.79,352.34 632.04,351.84 632.29,351.37 632.54,350.93 632.79,350.51 633.04,350.13 633.29,349.76 633.55,349.43 633.80,349.11 634.05,348.82 634.30,348.54 634.55,348.29 634.80,348.06 635.06,347.84 635.31,347.65 635.56,347.47 635.81,347.31 636.06,347.17 636.31,347.04 636.56,346.93 636.82,346.84 637.07,346.76 637.32,346.70 637.57,346.65 637.82,346.62 638.07,346.60 638.33,346.60 638.58,346.62 638.83,346.65 639.08,346.70 639.33,346.76 639.58,346.84 639.84,346.93 640.09,347.04 640.34,347.17 640.59,347.31 640.84,347.47 641.09,347.65 641.34,347.84 641.60,348.06 641.85,348.29 642.10,348.54 642.35,348.82 642.60,349.11 642.85,349.43 643.11,349.76 643.36,350.13 643.61,350.51 643.86,350.93 644.11,351.37 644.36,351.84 644.61,352.34 644.87,352.88 645.12,353.45 645.37,354.06 645.62,354.71 645.87,355.41 646.12,356.17 646.38,356.97 646.63,357.85 646.88,358.79 647.13,359.81 647.38,360.93 647.63,362.15 647.88,363.51 648.14,365.01 648.39,366.71 648.64,368.64 648.89,370.88 649.14,373.55 649.39,376.82 649.65,381.05 649.90,387.02 650.15,397.25 650.40,440.00 650.70,440.00 650.95,388.34 651.20,378.12 651.45,372.15 651.70,367.94 651.95,364.69 652.20,362.05 652.45,359.84 652.70,357.94 652.95,356.29 653.20,354.83 653.45,353.53 653.70,352.36 653.95,351.30 654.20,350.35 654.45,349.48 654.70,348.68 654.95,347.96 655.20,347.29 655.45,346.69 655.70,346.13 655.95,345.63 656.20,345.17 656.45,344.75 656.70,344.38 656.95,344.04 657.20,343.74 657.45,343.47 657.70,343.24 657.95,343.04 658.20,342.87 658.45,342.74 658.70,342.63 658.95,342.56 659.20,342.51 659.45,342.50 659.70,342.51 659.95,342.56 660.20,342.63 660.45,342.74 660.70,342.87 660.95,343.04 661.20,343.24 661.45,343.47 661.70,343.74 661.95,344.04 662.20,344.38 662.45,344.75 662.70,345.17 662.95,345.63 663.20,346.13 663.45,346.69 663.70,347.29 663.95,347.96 664.20,348.68 664.45,349.48 664.70,350.35 664.95,351.30 665.20,352.36 665.45,353.53 665.70,354.83 665.95,356.29 666.20,357.94 666.45,359.84 666.70,362.05 666.95,364.69 667.20,367.94 667.45,372.15 667.70,378.12 667.95,388.34 668.20,392.60 668.20,392.60 668.45,384.25 668.71,374.03 668.96,368.06 669.21,363.84 669.46,360.58 669.72,357.94 669.97,355.72 670.22,353.81 670.47,352.14 670.73,350.67 670.98,349.35 671.23,348.16 671.48,347.09 671.74,346.11 671.99,345.22 672.24,344.40 672.49,343.65 672.75,342.95 673.00,342.32 673.25,341.73 673.51,341.19 673.76,340.70 674.01,340.24 674.26,339.82 674.52,339.44 674.77,339.10 675.02,338.78 675.27,338.50 675.53,338.25 675.78,338.02 676.03,337.83 676.28,337.66 676.54,337.52 676.79,337.40 677.04,337.31 677.29,337.25 677.55,337.21 677.80,337.20 678.05,337.21 678.31,337.25 678.56,337.31 678.81,337.40 679.06,337.52 679.32,337.66 679.57,337.83 679.82,338.02 680.07,338.25 680.33,338.50 680.58,338.78 680.83,339.10 681.08,339.44 681.34,339.82 681.59,340.24 681.84,340.70 682.09,341.19 682.35,341.73 682.60,342.32 682.85,342.95 683.11,343.65 683.36,344.40 683.61,345.22 683.86,346.11 684.12,347.09 684.37,348.16 684.62,349.35 684.87,350.67 685.13,352.14 685.38,353.81 685.63,355.72 685.88,357.94 686.14,360.58 686.39,363.84 686.64,368.06 686.89,374.03 687.15,384.25 687.40,440.00 687.40,440.00 687.65,396.18 687.90,385.99 688.16,380.08 688.41,375.94 688.66,372.78 688.91,370.26 689.17,368.19 689.42,366.45 689.67,364.97 689.92,363.72 690.18,362.64 690.43,361.73 690.68,360.95 690.93,360.30 691.19,359.77 691.44,359.34 691.69,359.01 691.94,358.78 692.20,358.65 692.45,358.60 692.70,358.65 692.96,358.78 693.21,359.01 693.46,359.34 693.71,359.77 693.97,360.30 694.22,360.95 694.47,361.73 694.72,362.64 694.98,363.72 695.23,364.97 695.48,366.45 695.73,368.19 695.99,370.26 696.24,372.78 696.49,375.94 696.74,380.08 697.00,385.99 697.25,396.18 697.50,440.00 697.50,440.00 697.75,401.49 698.00,391.26 698.25,385.29 698.50,381.06 698.75,377.79 699.00,375.13 699.25,372.88 699.50,370.95 699.75,369.26 700.00,367.76 700.25,366.41 700.50,365.19 700.75,364.08 701.00,363.06 701.25,362.12 701.50,361.25 701.75,360.45 702.00,359.71 702.25,359.01 702.50,358.36 702.75,357.76 703.00,357.20 703.25,356.67 703.50,356.17 703.75,355.71 704.00,355.28 704.25,354.88 704.50,354.50 704.75,354.15 705.00,353.82 705.25,353.52 705.50,353.24 705.75,352.98 706.00,352.74 706.25,352.52 706.50,352.32 706.75,352.14 707.00,351.98 707.25,351.83 707.50,351.71 707.75,351.60 708.00,351.51 708.25,351.43 708.50,351.37 708.75,351.33 709.00,351.31 709.25,351.30 709.50,351.31 709.75,351.33 710.00,351.37 710.25,351.43 710.50,351.51 710.75,351.60 711.00,351.71 711.25,351.83 711.50,351.98 711.75,352.14 712.00,352.32 712.25,352.52 712.50,352.74 712.75,352.98 713.00,353.24 713.25,353.52 713.50,353.82 713.75,354.15 714.00,354.50 714.25,354.88 714.50,355.28 714.75,355.71 715.00,356.17 715.25,356.67 715.50,357.20 715.75,357.76 716.00,358.36 716.25,359.01 716.50,359.71 716.75,360.45 717.00,361.25 717.25,362.12 717.50,363.06 717.75,364.08 718.00,365.19 718.25,366.41 718.50,367.76 718.75,369.26 719.00,370.95 719.25,372.88 719.50,375.13 719.75,377.79 720.00,381.06 720.25,385.29 720.50,391.26 720.75,401.49 721.00,440.00 721.00,440.00 721.25,397.67 721.50,387.44 721.75,381.46 722.01,377.22 722.26,373.94 722.51,371.27 722.76,369.01 723.01,367.06 723.26,365.34 723.52,363.81 723.77,362.44 724.02,361.19 724.27,360.04 724.52,358.99 724.77,358.01 725.02,357.10 725.28,356.25 725.53,355.46 725.78,354.72 726.03,354.02 726.28,353.35 726.53,352.73 726.79,352.14 727.04,351.58 727.29,351.05 727.54,350.55 727.79,350.07 728.04,349.61 728.29,349.18 728.55,348.77 728.80,348.37 729.05,348.00 729.30,347.64 729.55,347.30 729.80,346.98 730.06,346.67 730.31,346.37 730.56,346.10 730.81,345.83 731.06,345.58 731.31,345.34 731.56,345.11 731.82,344.89 732.07,344.69 732.32,344.50 732.57,344.31 732.82,344.14 733.07,343.98 733.33,343.83 733.58,343.69 733.83,343.56 734.08,343.44 734.33,343.33 734.58,343.23 734.83,343.14 735.09,343.05 735.34,342.98 735.59,342.91 735.84,342.86 736.09,342.81 736.34,342.77 736.60,342.74 736.85,342.72 737.10,342.70 737.35,342.70 737.60,342.70 737.85,342.72 738.10,342.74 738.36,342.77 738.61,342.81 738.86,342.86 739.11,342.91 739.36,342.98 739.61,343.05 739.87,343.14 740.12,343.23 740.37,343.33 740.62,343.44 740.87,343.56 741.12,343.69 741.37,343.83 741.63,343.98 741.88,344.14 742.13,344.31 742.38,344.50 742.63,344.69 742.88,344.89 743.14,345.11 743.39,345.34 743.64,345.58 743.89,345.83 744.14,346.10 744.39,346.37 744.64,346.67 744.90,346.98 745.15,347.30 745.40,347.64 745.65,348.00 745.90,348.37 746.15,348.77 746.41,349.18 746.66,349.61 746.91,350.07 747.16,350.55 747.41,351.05 747.66,351.58 747.91,352.14 748.17,352.73 748.42,353.35 748.67,354.02 748.92,354.72 749.17,355.46 749.42,356.25 749.68,357.10 749.93,358.01 750.18,358.99 750.43,360.04 750.68,361.19 750.93,362.44 751.18,363.81 751.44,365.34 751.69,367.06 751.94,369.01 752.19,371.27 752.44,373.94 752.69,377.22 752.95,381.46 753.20,387.44 753.45,397.67 753.70,440.00 753.70,440.00 753.95,401.01 754.20,390.78 754.45,384.81 754.70,380.58 754.95,377.31 755.20,374.65 755.45,372.41 755.70,370.49 755.95,368.80 756.21,367.30 756.46,365.95 756.71,364.74 756.96,363.63 757.21,362.62 757.46,361.68 757.71,360.82 757.96,360.03 758.21,359.29 758.46,358.60 758.71,357.96 758.96,357.37 759.21,356.81 759.46,356.29 759.71,355.81 759.96,355.36 760.21,354.93 760.46,354.54 760.72,354.18 760.97,353.84 761.22,353.52 761.47,353.23 761.72,352.97 761.97,352.72 762.22,352.50 762.47,352.29 762.72,352.11 762.97,351.95 763.22,351.80 763.47,351.67 763.72,351.57 763.97,351.48 764.22,351.41 764.47,351.36 764.72,351.32 764.97,351.30 765.23,351.30 765.48,351.32 765.73,351.36 765.98,351.41 766.23,351.48 766.48,351.57 766.73,351.67 766.98,351.80 767.23,351.95 767.48,352.11 767.73,352.29 767.98,352.50 768.23,352.72 768.48,352.97 768.73,353.23 768.98,353.52 769.23,353.84 769.48,354.18 769.74,354.54 769.99,354.93 770.24,355.36 770.49,355.81 770.74,356.29 770.99,356.81 771.24,357.37 771.49,357.96 771.74,358.60 771.99,359.29 772.24,360.03 772.49,360.82 772.74,361.68 772.99,362.62 773.24,363.63 773.49,364.74 773.74,365.95 773.99,367.30 774.25,368.80 774.50,370.49 774.75,372.41 775.00,374.65 775.25,377.31 775.50,380.58" stroke="#008000"/>
</g></svg>
<div class="tab tabsel" style="left:12px;top:426px;width:130px;height:26px;border-top:none;border-bottom:1px solid #404040;box-shadow:inset -1px -1px 0 #808080"></div>
<div class="t" style="left:19px;top:433px;letter-spacing:0.24px">Frequency Response</div>
<div class="tab" style="left:142px;top:428px;width:213px;height:21px;border-top:none;border-left:1px solid #fff;border-bottom:1px solid #404040;box-shadow:inset -1px -1px 0 #808080"></div>
<div class="t" style="left:148px;top:431px;letter-spacing:0.28px">Time Response &amp; Coefficient Values</div>

<!-- coefficients scaling -->
<div class="t" style="left:7px;top:478px">Coefficients Scaling</div>
<div class="cb" style="left:120px;top:472px;width:183px;height:26px"><span class="v">Auto</span><div class="ar"></div></div>
<div class="t" style="left:307px;top:478px">Bit Width</div>
<div class="cb" style="left:359px;top:472px;width:73px;height:26px"><div class="a" style="left:2px;top:2px;width:48px;height:20px;background:#0A246A"></div><span class="v" style="color:#fff">16</span><div class="ar"></div></div>

<!-- architecture spec -->
<div class="grp" style="left:-3px;top:517px;width:1072px;height:170px"></div>
<div class="gt" style="left:4px;top:511px">Architecture Specification</div>
<div class="t" style="left:6px;top:537px">Device Family</div>
<div class="cb" style="left:119px;top:531px;width:132px;height:27px"><span class="v">Cyclone II</span><div class="ar"></div></div>
<div class="t" style="left:6px;top:568px">Structure</div>
<div class="cb" style="left:119px;top:562px;width:423px;height:26px"><span class="v">Distributed Arithmetic : Fully Parallel Filter</span><div class="ar"></div></div>
<div class="t" style="left:6px;top:598px">Pipeline Level</div>
<div class="cb" style="left:119px;top:592px;width:56px;height:26px"><span class="v">3</span><div class="ar"></div></div>
<div class="t" style="left:6px;top:628px">Data Storage</div>
<div class="cb" style="left:119px;top:622px;width:102px;height:25px"><span class="v">Auto</span><div class="ar"></div></div>
<div class="t" style="left:6px;top:658px">Coefficient Storage</div>
<div class="cb" style="left:119px;top:652px;width:102px;height:26px"><span class="v">Auto</span><div class="ar"></div></div>

<div class="chk dsb" style="left:349px;top:538px"></div>
<div class="t dis" style="left:366px;top:537px">Force Non-Symmetric Structure</div>
<div class="t dis" style="left:299px;top:628px">Multiplier Implementation</div>
<div class="cb dsb" style="left:441px;top:622px;width:101px;height:25px"><span class="v">Logic Cells</span><div class="ar"></div></div>
<div class="chk" style="left:293px;top:659px"></div>
<div class="t" style="left:310px;top:658px">Coefficients Reload</div>
<div class="chk dsb" style="left:426px;top:659px"></div>
<div class="t dis" style="left:443px;top:658px">Use Single Clock</div>

<div class="a" style="left:555px;top:531px;width:250px;height:153px;background:#fff;border-top:1px solid #808080;border-left:1px solid #808080;border-right:1px solid #fff;border-bottom:1px solid #fff;box-shadow:inset 1px 1px 0 #404040"></div>
<div class="btn" style="left:557px;top:533px;width:123px;height:19px"></div>
<div class="btn" style="left:680px;top:533px;width:123px;height:19px"></div>
<div class="t" style="left:557px;top:536px;width:123px;text-align:center;font-size:9px;letter-spacing:0.6px;color:#000">Resource</div>
<div class="t" style="left:680px;top:536px;width:123px;text-align:center;font-size:9px;letter-spacing:0.6px;color:#000">Utilization estimate</div>
<div class="a" style="left:557px;top:568px;width:246px;height:1px;background:#808080"></div>
<div class="t" style="left:557px;top:554px;width:123px;text-align:center;font-size:9px;letter-spacing:0.6px;color:#000">Logic Cells</div>
<div class="t" style="left:680px;top:554px;width:123px;text-align:center;font-size:9px;letter-spacing:0.6px;color:#000">7302</div>
<div class="a" style="left:557px;top:584px;width:246px;height:1px;background:#808080"></div>
<div class="t" style="left:557px;top:570px;width:123px;text-align:center;font-size:9px;letter-spacing:0.6px;color:#000">M512</div>
<div class="t" style="left:680px;top:570px;width:123px;text-align:center;font-size:9px;letter-spacing:0.6px;color:#000">0</div>
<div class="a" style="left:557px;top:600px;width:246px;height:1px;background:#808080"></div>
<div class="t" style="left:557px;top:586px;width:123px;text-align:center;font-size:9px;letter-spacing:0.6px;color:#000">M4K</div>
<div class="t" style="left:680px;top:586px;width:123px;text-align:center;font-size:9px;letter-spacing:0.6px;color:#000">0</div>
<div class="a" style="left:557px;top:616px;width:246px;height:1px;background:#808080"></div>
<div class="t" style="left:557px;top:602px;width:123px;text-align:center;font-size:9px;letter-spacing:0.6px;color:#000">M-RAM</div>
<div class="t" style="left:680px;top:602px;width:123px;text-align:center;font-size:9px;letter-spacing:0.6px;color:#000">0</div>
<div class="a" style="left:557px;top:632px;width:246px;height:1px;background:#808080"></div>
<div class="t" style="left:557px;top:618px;width:123px;text-align:center;font-size:9px;letter-spacing:0.6px;color:#000">M9K</div>
<div class="t" style="left:680px;top:618px;width:123px;text-align:center;font-size:9px;letter-spacing:0.6px;color:#000">0</div>
<div class="a" style="left:557px;top:648px;width:246px;height:1px;background:#808080"></div>
<div class="t" style="left:557px;top:634px;width:123px;text-align:center;font-size:9px;letter-spacing:0.6px;color:#000">M144K</div>
<div class="t" style="left:680px;top:634px;width:123px;text-align:center;font-size:9px;letter-spacing:0.6px;color:#000">0</div>
<div class="a" style="left:557px;top:664px;width:246px;height:1px;background:#808080"></div>
<div class="t" style="left:557px;top:650px;width:123px;text-align:center;font-size:9px;letter-spacing:0.6px;color:#000">MLAB</div>
<div class="t" style="left:680px;top:650px;width:123px;text-align:center;font-size:9px;letter-spacing:0.6px;color:#000">0</div>
<div class="a" style="left:557px;top:680px;width:246px;height:1px;background:#808080"></div>
<div class="t" style="left:557px;top:666px;width:123px;text-align:center;font-size:9px;letter-spacing:0.6px;color:#000">Multipliers</div>
<div class="t" style="left:680px;top:666px;width:123px;text-align:center;font-size:9px;letter-spacing:0.6px;color:#000">0</div>
<div class="a" style="left:679px;top:552px;width:1px;height:129px;background:#808080"></div>

<!-- throughput -->
<div class="grp" style="left:815px;top:540px;width:243px;height:96px"></div>
<div class="gt" style="left:821px;top:533px">Throughput (Fully Streaming)</div>
<div class="t" style="left:819px;top:559px">- An input data is processed</div>
<div class="t" style="left:819px;top:577px">every 1 clock periods.</div>
<div class="t" style="left:819px;top:599px">- A new output data is generated</div>
<div class="t" style="left:819px;top:617px">every clock period.</div>

<!-- right panel -->
<div class="grp" style="left:828px;top:21px;width:240px;height:46px"></div>
<div class="gt" style="left:834px;top:15px">Rate Specification</div>
<div class="cb" style="left:834px;top:35px;width:115px;height:25px"><span class="v">Single Rate</span><div class="ar"></div></div>
<div class="t dis" style="left:954px;top:41px">Factor</div>
<div class="cb dsb" style="left:992px;top:35px;width:70px;height:25px"><span class="v">2</span><div class="ar"></div></div>
<div class="chk" style="left:831px;top:76px"></div>
<div class="t" style="left:847px;top:76px;font-family:'Liberation Serif',serif;font-weight:normal;font-size:12px;letter-spacing:1.05px;text-shadow:0.4px 0 0 #000">Add global clock enable pin</div>

<div class="grp" style="left:828px;top:102px;width:240px;height:133px"></div>
<div class="gt" style="left:834px;top:96px">Input Specification</div>
<div class="t" style="left:832px;top:122px">Number of Input Channels</div>
<div class="cb" style="left:985px;top:116px;width:77px;height:25px"><span class="v">1</span><div class="ar"></div></div>
<div class="grp" style="left:834px;top:152px;width:225px;height:77px"></div>
<div class="gt" style="left:840px;top:146px">Input Number System</div>
<div class="cb" style="left:838px;top:166px;width:218px;height:26px"><span class="v">Signed Binary</span><div class="ar"></div></div>
<div class="t" style="left:838px;top:202px">Input Bit Width</div>
<div class="cb" style="left:924px;top:196px;width:132px;height:25px"><span class="v">16</span><div class="ar"></div></div>

<div class="grp" style="left:828px;top:247px;width:240px;height:126px"></div>
<div class="gt" style="left:834px;top:240px">Output Specification</div>
<div class="t" style="left:832px;top:262px">Full Resolution Bit Width is 35</div>
<div class="t" style="left:832px;top:289px">Based on Method</div>
<div class="cb" style="left:932px;top:283px;width:130px;height:25px"><span class="v">Actual Coefficients</span><div class="ar"></div></div>
<div class="grp" style="left:834px;top:320px;width:225px;height:46px"></div>
<div class="gt" style="left:840px;top:313px">Output Number System</div>
<div class="cb" style="left:838px;top:335px;width:218px;height:25px"><span class="v">Full Resolution</span><div class="ar"></div></div>

<!-- status -->
<div class="a" style="left:0;top:690px;width:1060px;height:2px;background:#404040;border-top:1px solid #808080"></div>
<div class="a" style="left:0;top:695px;width:13px;height:12px;border-radius:5px;background:#fff;border:1.5px solid #3D6FB0"></div>
<div class="a" style="left:5px;top:698px;width:3px;height:1px;background:#3D6FB0"></div>
<div class="a" style="left:6px;top:700px;width:2px;height:4px;background:#3D6FB0"></div>
<div class="t" style="left:18px;top:694px;letter-spacing:0.165px">Warning: Force non-symmetric structure is selectable only if coefficients reload is selected.</div>
<div class="btn" style="left:1051px;top:693px;width:12px;height:9px"></div>
<div class="a" style="left:1054px;top:696px;width:5px;height:3px;background:#000;clip-path:polygon(50% 0,100% 100%,0 100%)"></div>
<div class="btn" style="left:1051px;top:704px;width:12px;height:9px"></div>
<div class="a" style="left:1054px;top:707px;width:5px;height:3px;background:#000;clip-path:polygon(0 0,100% 0,50% 100%)"></div>
<div class="a" style="left:0;top:714px;width:1060px;height:1px;background:#fff"></div>

<div class="a" style="left:913px;top:715px;width:1px;height:30px;background:#fff"></div>
<div class="a" style="left:985px;top:726px;width:2px;height:20px;background:#404040"></div>
<div class="a" style="left:996px;top:715px;width:1px;height:30px;background:#fff"></div>
<div class="t" style="left:931px;top:721px">Cancel</div>
<div class="t" style="left:1013px;top:721px">Finish</div>
<div class="t" style="left:886px;top:711px;font-size:17px;line-height:20px;height:20px;letter-spacing:0;color:#C4C4C4;text-shadow:1px 1px 0 rgba(70,70,70,0.7)">CSDN</div>
<div class="t" style="left:942px;top:711px;font-size:16px;line-height:20px;height:20px;letter-spacing:0;color:#C4C4C4;text-shadow:1px 1px 0 rgba(70,70,70,0.7)">@</div>
<svg class="a" style="left:958px;top:711px" width="90" height="20">
<g fill="none" stroke-linecap="round" stroke-linejoin="round">
<g transform="translate(1,1)" stroke="rgba(70,70,70,0.7)" stroke-width="1.3" id="wmd">
<path d="M2,3 L7,2 M1,7 L16,6 M6,2 L6,16 L4,15 M1,12 L9,9 M10,1 L11,9 L16,16 M10,14 L15,9 M13,2 L15,4"/>
<path transform="translate(17,0)" d="M14,1 L3,3 M4,4 L5,6 M8,4 L8,6 M12,4 L11,6 M1,8 L1,7 L16,7 L16,8 M3,10 L14,10 M7,7 L3,16 M6,12 L13,12 L7,16 M8,13 L16,16"/>
<path transform="translate(49,0)" d="M4,1 L1,6 L5,6 L1,11 L6,10 M1,15 L6,13 M11,0 L12,2 M7,3 L16,3 L16,6 L8,6 M8,3 L7,16 M9,9 L15,9 L15,16 M11,9 L11,16 M13,9 L13,16 M9,12 L15,12"/>
<path transform="translate(67,0)" d="M6,1 L1,2 M0,6 L7,6 M4,2 L4,16 M4,7 L0,13 M4,8 L7,11 M8,1 L15,1 L15,6 L8,6 Z M8,9 L15,9 M11,9 L11,15 M9,12 L14,12 M7,16 L16,16"/>
</g>
<g stroke="#C4C4C4" stroke-width="1.3">
<path d="M2,3 L7,2 M1,7 L16,6 M6,2 L6,16 L4,15 M1,12 L9,9 M10,1 L11,9 L16,16 M10,14 L15,9 M13,2 L15,4"/>
<path transform="translate(17,0)" d="M14,1 L3,3 M4,4 L5,6 M8,4 L8,6 M12,4 L11,6 M1,8 L1,7 L16,7 L16,8 M3,10 L14,10 M7,7 L3,16 M6,12 L13,12 L7,16 M8,13 L16,16"/>
<path transform="translate(49,0)" d="M4,1 L1,6 L5,6 L1,11 L6,10 M1,15 L6,13 M11,0 L12,2 M7,3 L16,3 L16,6 L8,6 M8,3 L7,16 M9,9 L15,9 L15,16 M11,9 L11,16 M13,9 L13,16 M9,12 L15,12"/>
<path transform="translate(67,0)" d="M6,1 L1,2 M0,6 L7,6 M4,2 L4,16 M4,7 L0,13 M4,8 L7,11 M8,1 L15,1 L15,6 L8,6 Z M8,9 L15,9 M11,9 L11,15 M9,12 L14,12 M7,16 L16,16"/>
</g>
</g></svg>
<div class="t" style="left:995px;top:711px;font-size:17px;line-height:20px;height:20px;letter-spacing:0;color:#C4C4C4;text-shadow:1px 1px 0 rgba(70,70,70,0.7)">C</div>
</body></html>
